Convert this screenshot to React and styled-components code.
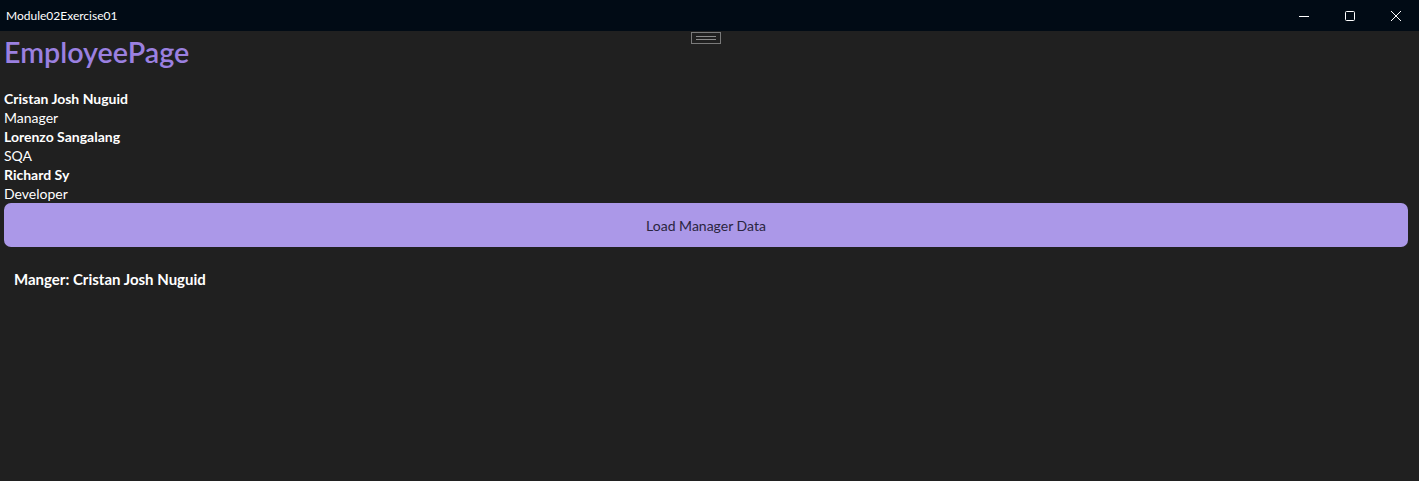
import React from "react";
import styled, { createGlobalStyle } from "styled-components";

const Global = createGlobalStyle`
  html, body { margin: 0; padding: 0; background: #202020; }
  body { font-family: "Lato", "Liberation Sans", sans-serif; overflow: hidden; }
  * { box-sizing: border-box; }
`;

const Window = styled.div`
  width: 1419px;
  height: 481px;
  display: flex;
  flex-direction: column;
  background: #202020;
  color: #ffffff;
`;

const TitleBar = styled.div`
  height: 31px;
  flex: none;
  display: flex;
  align-items: center;
  background: #010b15;
  padding-left: 6px;
`;

const TitleText = styled.span`
  font-size: 12px;
  color: #ffffff;
  flex: 1;
`;

const Controls = styled.div`
  display: flex;
  height: 100%;
`;

const ControlButton = styled.div`
  width: 46px;
  height: 100%;
  display: flex;
  align-items: center;
  justify-content: center;
`;

const Content = styled.div`
  position: relative;
  flex: 1;
  display: flex;
  flex-direction: column;
  padding: 0 11px 0 4px;
`;

const Grip = styled.div`
  position: absolute;
  left: 691px;
  top: 1px;
  width: 30px;
  height: 12px;
  border: 1px solid #7a7a7a;
  display: flex;
  flex-direction: column;
  justify-content: center;
  align-items: center;
  gap: 2px;
  &::before, &::after {
    content: "";
    width: 20px;
    height: 1px;
    background: #8a8a8a;
  }
`;

const PageTitle = styled.h1`
  margin: 2px 0 0 0;
  font-size: 28.7px;
  line-height: 38px;
  font-weight: 600;
  color: #9b80e0;
`;

const List = styled.div`
  margin-top: 18px;
  display: flex;
  flex-direction: column;
`;

const Line = styled.div`
  font-size: 14px;
  line-height: 19px;
  font-weight: ${(p) => (p.$bold ? 700 : 400)};
  color: #ffffff;
`;

const LoadButton = styled.button`
  height: 44px;
  width: 100%;
  border: none;
  border-radius: 7px;
  background: #ab98e8;
  color: #2a2540;
  font-family: inherit;
  font-size: 14px;
  cursor: pointer;
`;

const ManagerLabel = styled.div`
  margin: 22px 0 0 10px;
  font-size: 15px;
  line-height: 20px;
  font-weight: 700;
  color: #ffffff;
`;

const employees = [
  { name: "Cristan Josh Nuguid", role: "Manager" },
  { name: "Lorenzo Sangalang", role: "SQA" },
  { name: "Richard Sy", role: "Developer" },
];

export default function App() {
  return (
    <Window>
      <Global />
      <TitleBar>
        <TitleText>Module02Exercise01</TitleText>
        <Controls>
          <ControlButton>
            <svg width="12" height="12" viewBox="0 0 12 12">
              <line x1="1" y1="6.5" x2="11" y2="6.5" stroke="#fff" strokeWidth="1" />
            </svg>
          </ControlButton>
          <ControlButton>
            <svg width="12" height="12" viewBox="0 0 12 12">
              <rect x="1.5" y="1.5" width="9" height="9" rx="1" fill="none" stroke="#fff" strokeWidth="1" />
            </svg>
          </ControlButton>
          <ControlButton>
            <svg width="12" height="12" viewBox="0 0 12 12">
              <path d="M1 1 L11 11 M11 1 L1 11" stroke="#fff" strokeWidth="1" />
            </svg>
          </ControlButton>
        </Controls>
      </TitleBar>
      <Content>
        <Grip />
        <PageTitle>EmployeePage</PageTitle>
        <List>
          {employees.map((e) => (
            <React.Fragment key={e.name}>
              <Line $bold>{e.name}</Line>
              <Line>{e.role}</Line>
            </React.Fragment>
          ))}
        </List>
        <LoadButton>Load Manager Data</LoadButton>
        <ManagerLabel>Manger: Cristan Josh Nuguid</ManagerLabel>
      </Content>
    </Window>
  );
}
